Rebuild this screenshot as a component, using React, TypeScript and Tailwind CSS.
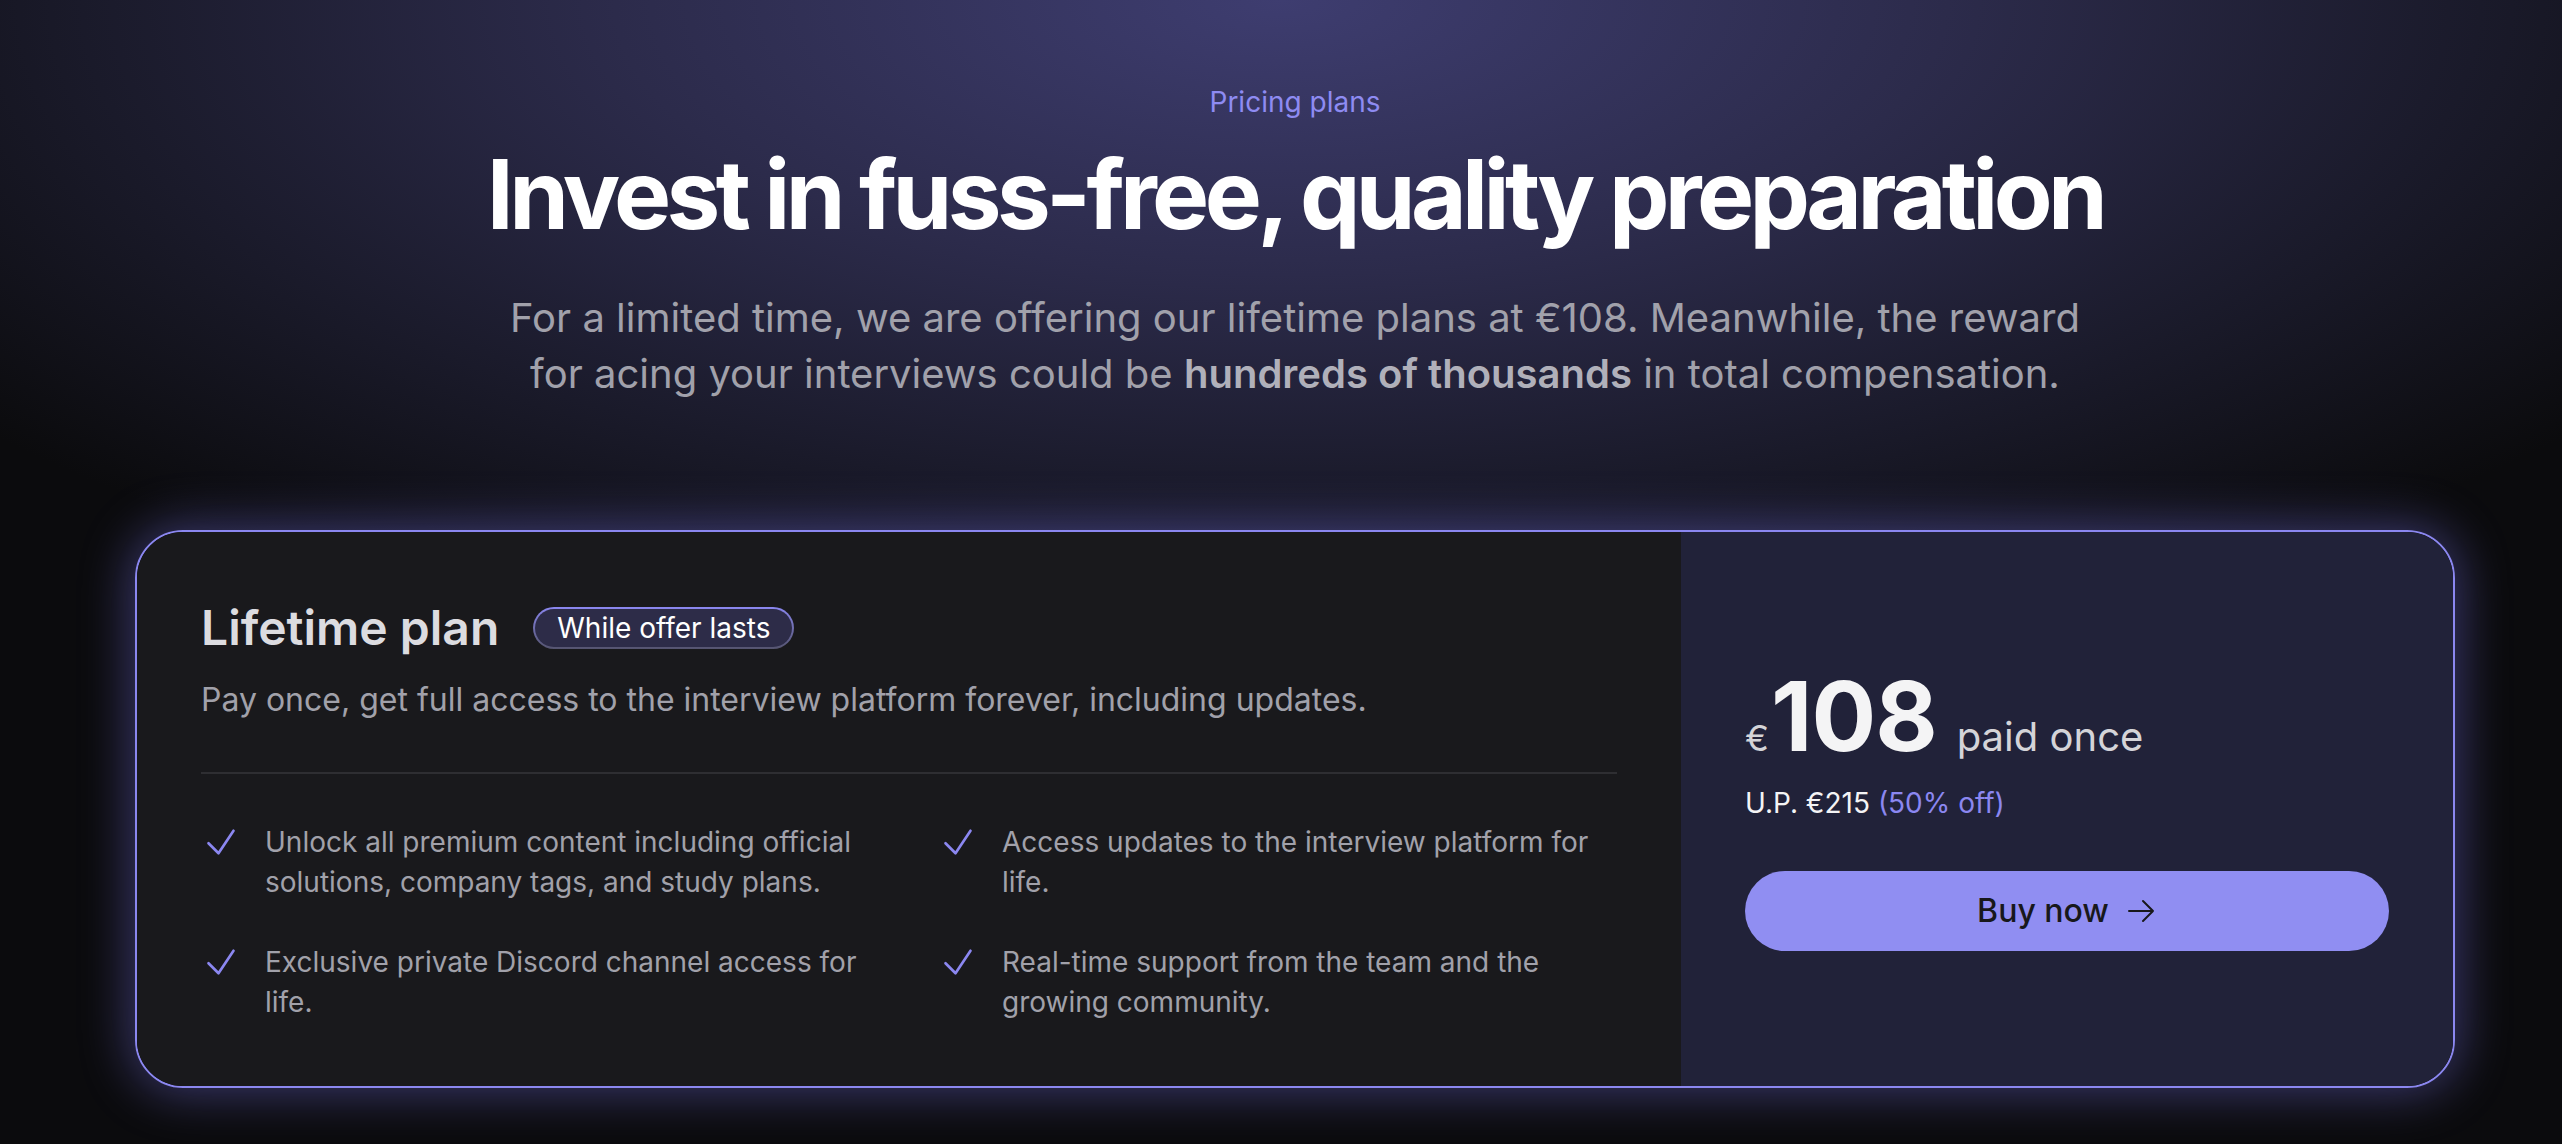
import React from "react";

function Check() {
  return (
    <svg viewBox="0 0 24 24" fill="none" stroke="#8b87f0" strokeWidth={1.6} className="w-[40px] h-[40px] shrink-0" strokeLinecap="round" strokeLinejoin="round">
      <path d="m4.5 12.75 6 6 9-13.5" />
    </svg>
  );
}

function Arrow() {
  return (
    <svg viewBox="0 0 24 24" fill="none" stroke="#18181b" strokeWidth={1.5} className="w-[32px] h-[32px]" strokeLinecap="round" strokeLinejoin="round">
      <path d="M13.5 4.5 21 12m0 0-7.5 7.5M21 12H3" />
    </svg>
  );
}

const features = [
  "Unlock all premium content including official solutions, company tags, and study plans.",
  "Access updates to the interview platform for life.",
  "Exclusive private Discord channel access for life.",
  "Real-time support from the team and the growing community.",
];

export default function App() {
  return (
    <div className="w-full min-h-[1144px] bg-[#0b0b0d] bg-[radial-gradient(ellipse_65%_60%_at_50%_0%,#3e3d70_0%,#2c2b4b_40%,#1a1a2a_72%,#0b0b0d_100%)] font-['Inter',sans-serif] flex flex-col items-center pl-[28px] pt-[82px] pb-[57px]">
      <p className="text-[28px] leading-[40px] text-[#8e8bf2]">Pricing plans</p>
      <h1 className="mt-[24px] text-[96px] leading-none font-bold tracking-[-0.048em] text-white">
        Invest in fuss-free, quality preparation
      </h1>
      <p className="mt-[48px] text-[40px] leading-[56px] text-center text-[#a1a1ab]">
        For a limited time, we are offering our lifetime plans at €108. Meanwhile, the reward
        <br />
        for acing your interviews could be <span className="font-semibold text-[#b0b0ba]">hundreds of thousands</span> in total compensation.
      </p>

      <div className="mt-[128px] w-[2320px] grid grid-cols-3 rounded-[48px] border-2 border-[#8b87f0] overflow-hidden shadow-[0_0_50px_4px_rgba(120,116,230,0.45)]">
        <div className="col-span-2 bg-[#19191c] p-[64px]">
          <div className="flex items-center gap-[34px]">
            <h2 className="text-[48px] leading-[64px] font-semibold text-[#dcdce0]">Lifetime plan</h2>
            <span className="rounded-full p-[2px] bg-gradient-to-b from-[#8b87f0] to-[#55546f]">
              <span className="block rounded-full bg-[#2d2c48] px-[22px] text-[28px] leading-[38px] text-white">While offer lasts</span>
            </span>
          </div>
          <p className="mt-[16px] text-[32px] leading-[48px] text-[#a1a1aa]">
            Pay once, get full access to the interview platform forever, including updates.
          </p>
          <div className="my-[48px] h-[2px] bg-[#2e2e32]" />
          <ul className="grid grid-cols-2 gap-x-[58px] gap-y-[40px]">
            {features.map((f) => (
              <li key={f} className="flex gap-[24px]">
                <Check />
                <span className="text-[28px] leading-[40px] text-[#a1a1aa]">{f}</span>
              </li>
            ))}
          </ul>
        </div>
        <div className="bg-[#212239] flex flex-col justify-center px-[64px]">
          <div className="flex items-baseline">
            <span className="text-[36px] text-[#d4d4d8] mr-[2px]">€</span>
            <span className="text-[96px] leading-none font-bold text-[#f4f4f5] tracking-[-0.01em]">108</span>
            <span className="ml-[20px] text-[40px] text-[#d4d4d8]">paid once</span>
          </div>
          <p className="mt-[16px] text-[28px] leading-[40px] text-[#f4f4f5]">
            U.P. €215 <span className="text-[#8b87f0]">(50% off)</span>
          </p>
          <button className="mt-[48px] h-[80px] w-full rounded-full bg-[#908ef2] flex items-center justify-center gap-[16px] text-[32px] font-medium text-[#18181b]">
            Buy now
            <Arrow />
          </button>
        </div>
      </div>
    </div>
  );
}
